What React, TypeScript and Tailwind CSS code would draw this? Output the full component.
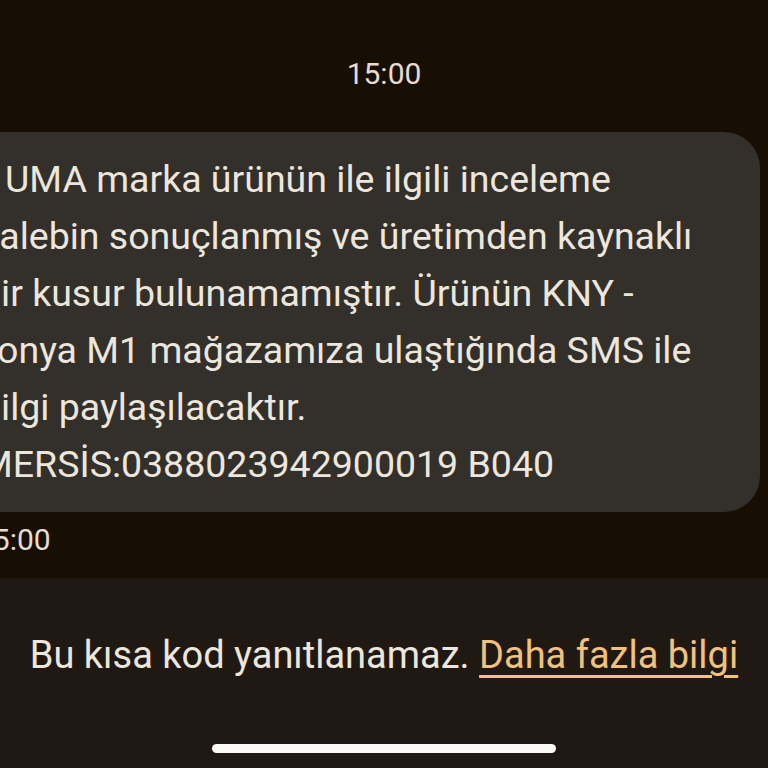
import React from 'react';

const lines = [
    { text: 'UMA marka ürünün ile ilgili inceleme', pad: 'pl-[25px]' },
    { text: 'talebin sonuçlanmış ve üretimden kaynaklı', pad: 'pl-[7px]' },
    { text: 'bir kusur bulunamamıştır. Ürünün KNY -', pad: '' },
    { text: 'Konya M1 mağazamıza ulaştığında SMS ile', pad: '-ml-[6px]' },
    { text: 'bilgi paylaşılacaktır.', pad: '' },
    { text: 'MERSİS:0388023942900019 B040', pad: '' },
];

const App: React.FC = () => {
    return (
        <div className="w-[768px] h-[768px] overflow-hidden bg-[#170f04] flex flex-col font-['Roboto',sans-serif] text-[#ece6dc]">
            <div className="pt-[56px] h-[132px] text-center text-[30px] leading-[36px] text-[#e6ddd0]">15:00</div>

            <div className="ml-[-60px] mr-2 h-[380px] rounded-[36px] bg-[#33302b] pl-[40px] pt-[19px]">
                {lines.map((line, i) => (
                    <div key={i} className={`whitespace-nowrap text-[37.5px] leading-[57px] ${line.pad}`}>
                        {line.text}
                    </div>
                ))}
            </div>

            <div className="ml-[-24px] h-[66px] pt-[10px] text-[30px] leading-[36px] text-[#e6ddd0]">15:00</div>

            <div className="flex-1 bg-[#201913] flex flex-col items-center">
                <div className="mt-[54px] whitespace-nowrap text-[38px] leading-[46px]">
                    Bu kısa kod yanıtlanamaz.{' '}
                    <a className="text-[#f0c27b] underline underline-offset-[7px] decoration-[3px]">Daha fazla bilgi</a>
                </div>
                <div className="mt-auto mb-[15px] w-[344px] h-[9px] rounded-full bg-[#fbf9f5]" />
            </div>
        </div>
    );
};

export default App;
